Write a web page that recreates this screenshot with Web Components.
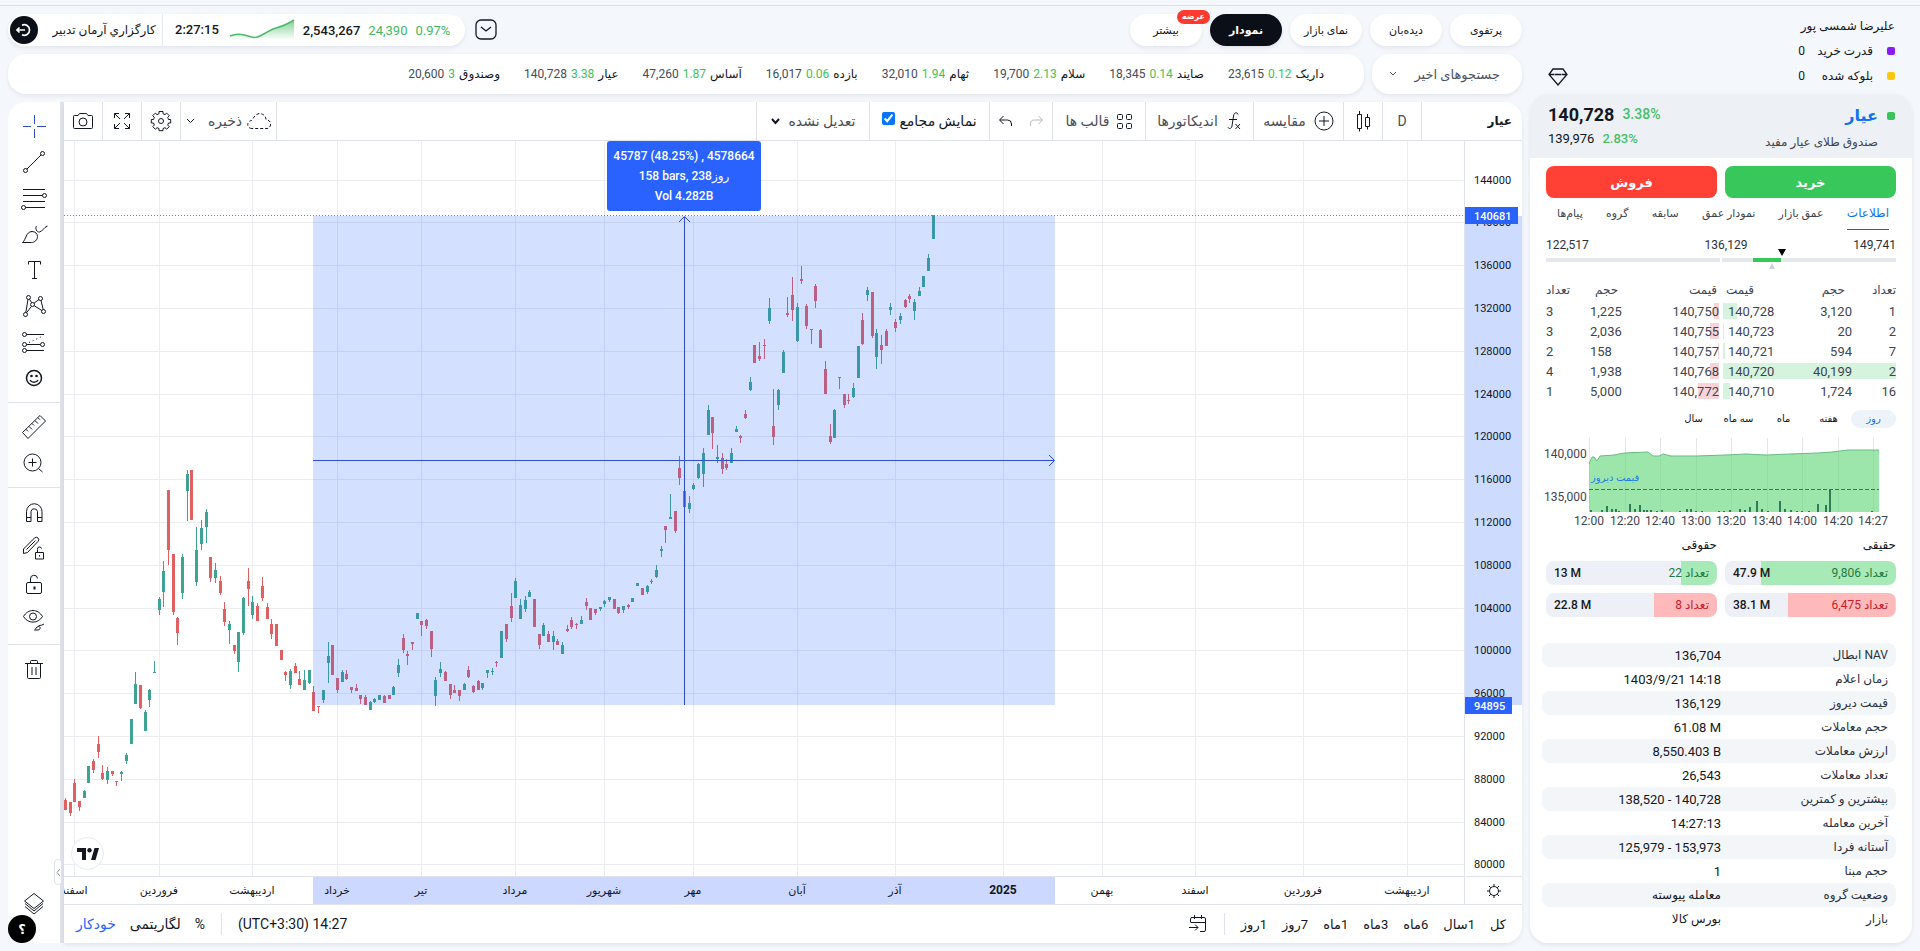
<!DOCTYPE html>
<html lang="fa">
<head>
<meta charset="utf-8">
<meta name="viewport" content="width=device-width, initial-scale=1">
<title>نمودار عیار</title>
<style>
  html, body { margin: 0; }
  body { background: #f4f7fb; font-family: Roboto, "DejaVu Sans", sans-serif; color: #131722; }
</style>
</head>
<body>
<trading-app></trading-app>

<script>
const BASE = `<style>
  :host, *, *::before, *::after { box-sizing: border-box; }
  button, select, input { font: inherit; color: inherit; margin: 0; }
  button { background: none; border: 0; padding: 0; cursor: pointer; }
  a { color: inherit; text-decoration: none; }
  svg { display: block; flex: none; }
  .ico { fill: none; stroke: currentColor; stroke-width: 1; }
</style>`;

function component(tag, html, setup) {
  const template = document.createElement('template');
  template.innerHTML = BASE + html;
  customElements.define(tag, class extends HTMLElement {
    connectedCallback() {
      if (this.shadowRoot) return;
      const root = this.attachShadow({ mode: 'open' });
      root.append(template.content.cloneNode(true));
      if (setup) setup.call(this, root);
    }
  });
}

/* ---------- top bar ---------- */
component('nav-pill', `<style>
  :host { display: block; position: relative; width: 72px; }
  a { display: flex; align-items: center; justify-content: center; height: 32px; border-radius: 16px;
      background: #fff; font-size: 11px; box-shadow: 0 2px 4px #1d2b4a14; white-space: nowrap; }
  :host([active]) a { background: #0b0f17; color: #fff; font-weight: bold; }
  ::slotted([slot=badge]) { position: absolute; top: -4px; right: -8px; height: 14px; line-height: 14px; padding: 0 5px;
      border-radius: 7px; background: #ff3b30; color: #fff; font-size: 8px; font-weight: bold; }
</style><a href="#"><slot></slot></a><slot name="badge"></slot>`);

component('market-summary', `<style>
  :host { display: flex; align-items: center; height: 32px; width: 457px; background: #fff; border-radius: 16px;
      box-shadow: 0 2px 4px #1d2b4a14; font-size: 13px; padding-left: 2px; }
  .out { width: 28px; height: 28px; border-radius: 50%; background: #0b0f17; color: #fff; display: grid; place-items: center; }
  .broker { width: 124px; padding-left: 8px; text-align: center; font-size: 12px; white-space: nowrap; }
  .time { border-left: 1px solid #e4e8ef; height: 32px; line-height: 32px; padding-left: 12px; }
  .g { color: #43b75d; }
  span, b { margin-left: 8px; font-weight: normal; }
  .time, b { font-weight: 500; }
  svg.sp { margin-left: 10px; }
</style>
<button class="out" aria-label="خروج"><svg class="ico" width="16" height="16"><path d="M6 3.2A5.3 5.3 0 1 1 6 12.8M1 8h8M3.5 5.5 1 8l2.500 2.500" stroke-width="1.700"/></svg></button>
<div class="broker" dir="rtl">کارگزاري آرمان تدبیر</div>
<div class="time">2:27:15</div>
<svg class="sp" width="66" height="24" viewBox="0 0 66 24"><defs><linearGradient id="g" x2="0" y2="1"><stop stop-color="#7fd394"/><stop offset="1" stop-color="#fff"/></linearGradient></defs>
<path d="M1 18C8 15 13 16 19 18S28 20 33 17 43 11 47 10 57 7 65 2V22H1Z" fill="url(#g)"/><path d="M1 18C8 15 13 16 19 18S28 20 33 17 43 11 47 10 57 7 65 2" fill="none" stroke="#4cbb6c" stroke-width="1.500"/></svg>
<b>2,543,267</b><span class="g">24,390</span><span class="g">0.97%</span>`);

component('top-bar', `<style>
  :host { display: flex; align-items: center; height: 32px; }
  .toggle { margin-left: 10px; }
  nav { display: flex; gap: 8px; margin-left: auto; }
</style>
<market-summary></market-summary>
<button class="toggle" aria-label="باز کردن"><svg class="ico" width="22" height="22"><rect x="1" y="1" width="20" height="19" rx="5" stroke-width="1.300"/><path d="m6 8 5 4 5-4" stroke-width="1.300"/></svg></button>
<nav dir="rtl">
  <nav-pill>پرتفوی</nav-pill><nav-pill>دیده‌بان</nav-pill><nav-pill>نمای بازار</nav-pill>
  <nav-pill active>نمودار</nav-pill><nav-pill>بیشتر<span slot="badge">عرضه</span></nav-pill>
</nav>`);

component('ticker-item', `<style>
  :host { display: flex; gap: 4px; font-size: 12px; line-height: 20px; white-space: nowrap; }
  .c { color: #3fbf5c; } .p { color: #464c58; }
</style><slot></slot><span class="c"></span><span class="p"></span>`, function (root) {
  root.querySelector('.c').textContent = this.getAttribute('change');
  root.querySelector('.p').textContent = this.getAttribute('price');
});

component('ticker-row', `<style>
  :host { display: flex; gap: 8px; height: 40px; direction: rtl; }
  .card { background: #fff; border-radius: 18px; box-shadow: 0 2px 4px #1d2b4a14; display: flex; align-items: center; }
  .recent { width: 150px; justify-content: space-between; padding: 0 22px 0 17px; font-size: 13px; color: #4d535f; white-space: nowrap; }
  .list { flex: 1; gap: 24px; padding-right: 40px; overflow: hidden; }
</style>
<button class="card recent"><span>جستجوهای اخیر</span><svg class="ico" width="8" height="6"><path d="m1 1 3 3 3-3"/></svg></button>
<div class="card list">
  <ticker-item change="0.12" price="23,615">داریک</ticker-item>
  <ticker-item change="0.14" price="18,345">صایند</ticker-item>
  <ticker-item change="2.13" price="19,700">سلام</ticker-item>
  <ticker-item change="1.94" price="32,010">ثهام</ticker-item>
  <ticker-item change="0.06" price="16,017">بازده</ticker-item>
  <ticker-item change="1.87" price="47,260">آساس</ticker-item>
  <ticker-item change="3.38" price="140,728">عیار</ticker-item>
  <ticker-item change="3" price="20,600">وصندوق</ticker-item>
</div>`);

/* ---------- chart: drawing tools ---------- */
const TOOLS = [
  ['نشانگر', '<g stroke="#2a50c8"><path d="M3 14.500h8M17 14.500h9M14.500 3v9M14.500 17v9"/></g>'],
  ['خط روند', '<circle cx="5.500" cy="22.500" r="2"/><circle cx="22.500" cy="5.500" r="2"/><path d="M7 21 21 7"/>'],
  ['فیبوناچی', '<path d="M3 5.500h22M3 11.500h19.500M3 17.500h22M5.500 23.500H25"/><circle cx="24.500" cy="11.500" r="2"/><circle cx="3.500" cy="23.500" r="2"/>'],
  ['قلم مو', '<path d="M2.500 22.500C6 20 6 11.500 12 11.500c3.500 0 5.500 2.500 5.500 5 0 3.500-3 6-6 6ZM16.500 6c-1.500 2 0 6.500 3 6 3-.5 4-4.500 8-6"/>'],
  ['متن', '<path d="M8.500 8.500v-3h12v3M14.500 5.500v17M12 22.500h5"/>'],
  ['الگوها', '<circle cx="8.500" cy="5.500" r="2"/><circle cx="20.500" cy="6.500" r="2"/><circle cx="12.500" cy="12.500" r="2"/><circle cx="5.500" cy="22.500" r="2"/><circle cx="23.500" cy="19.500" r="2"/><path d="m8 7.500-2.200 13M9.500 7.200l2.200 3.500M14 11.200l5-3.700M6.500 20.800l5-6.500M14.200 13.700l7.600 4.800M21 8.500l2.200 9"/>'],
  ['پیش‌بینی', '<circle cx="4.500" cy="6.500" r="2"/><circle cx="4.500" cy="16.500" r="2"/><circle cx="22.500" cy="16.500" r="2"/><circle cx="4.500" cy="22.500" r="2"/><path d="M6.500 6.500H24M6.500 16.500h14M6.500 22.500H24"/><path stroke-dasharray="1 3" d="m9 14.500 14-6.500"/>'],
  ['شکلک', '<circle cx="14" cy="14" r="7.500" stroke-width="1.500"/><path d="M10 16c1.500 3 6.500 3 8 0" stroke-width="1.500"/><g fill="currentColor" stroke="none"><circle cx="11.500" cy="12" r="1.300"/><circle cx="16.500" cy="12" r="1.300"/></g>'],
  null,
  ['خط‌کش', '<path d="M2.500 19.500 20 2.500l5.500 5.500-17.500 17.500ZM6 16.300l2 2M9 13.400l3 3M12 10.500l2 2M15 7.600l3 3M18 4.700l2 2"/>'],
  ['بزرگ‌نمایی', '<circle cx="12.500" cy="13.500" r="8.500"/><path d="m18.500 19.500 4 3.500M8.500 13.500h8M12.500 9.500v8"/>'],
  null,
  ['آهنربا', '<path d="M6.500 23.500v-10a7.500 7.500 0 0 1 15.500 0v10h-4.500v-10a3.300 3.300 0 0 0-6.500 0v10ZM6.500 19.500H11M17.500 19.500H22"/>'],
  ['قفل رسم', '<path d="M3.500 19.500v-4.500L14.500 4a2 2 0 0 1 3.500 3.500L7.500 18.500ZM6.500 15.500l9-9M15.500 18.500h8v6.500h-8ZM17.500 18.500v-3a2 2 0 0 1 4-1M19.500 21v1.500"/>'],
  ['قفل', '<rect x="6.500" y="12.500" width="15" height="11" rx="1.500"/><path d="M10.500 12.500V9a3.500 3.500 0 0 1 7-.5"/><path d="M14.500 16.500v3" stroke-width="2"/>'],
  ['نمایش', '<path d="M3.500 10.500C8 2.500 18 2.500 22.500 10.500 18 18 8 18 3.500 10.500Z"/><circle cx="13" cy="10.500" r="3.500"/><path d="M14.500 24c1.500-.5 1.500-3.500 4-3.500 2.500 0 2 3.500-.5 3.500ZM18.500 20.500c0-2 2 0 5.500-2.500"/>'],
  null,
  ['حذف', '<path d="M5 8.500h18M10.500 8.500v-2a1 1 0 0 1 1-1h5a1 1 0 0 1 1 1v2M7.500 8.500v14a1 1 0 0 0 1 1h11a1 1 0 0 0 1-1v-14M12 12v8M16 12v8"/>'],
];

component('draw-tools', `<style>
  :host { display: flex; flex-direction: column; width: 52px; padding: 6px 0 22px; background: #fff; position: relative; }
  button { height: 36px; display: grid; place-items: center; }
  hr { width: 100%; border: 0; border-top: 1px solid #e0e3eb; margin: 6px 0; }
  .layers { margin-top: auto; }
  .help { position: absolute; left: 0; bottom: 0; width: 28px; height: 28px; border-radius: 50%; background: #000; color: #fff; font-size: 13px; font-weight: bold; }
  .fold { position: absolute; right: -2px; bottom: 58px; width: 8px; height: 26px; border: 1px solid #e0e3eb; border-radius: 4px; background: #fff; color: #9598a1; }
</style><button class="layers" aria-label="لایه‌ها"><svg class="ico" width="28" height="28"><path d="m14 4.500 9.500 7.500-9.500 7.500L4.500 12ZM5 14.500l9 7.500 9-7.500M5 17.500l9 7.500 9-7.500"/></svg></button>
<button class="help">؟</button>
<button class="fold" aria-label="بستن"><svg class="ico" width="5" height="9"><path d="M4 1 1 4.500 4 8"/></svg></button>`, function (root) {
  const anchor = root.querySelector('.layers');
  for (const tool of TOOLS) {
    if (!tool) { anchor.before(document.createElement('hr')); continue; }
    const b = document.createElement('button');
    b.setAttribute('aria-label', tool[0]);
    b.innerHTML = `<svg class="ico" width="28" height="28">${tool[1]}</svg>`;
    anchor.before(b);
  }
});

/* ---------- chart: header toolbar ---------- */
component('chart-toolbar', `<style>
  :host { display: flex; height: 39px; border-bottom: 1px solid #e0e3eb; background: #fff; direction: rtl; font-size: 14px; color: #4a4e59; }
  :host > * { white-space: nowrap; }
  .cell { display: flex; align-items: center; justify-content: center; border-left: 1px solid #e0e3eb; gap: 8px; white-space: nowrap; }
  .dark, .ico { color: #131722; }
  .symbol { width: 101px; justify-content: flex-start; padding-right: 10px; font-size: 12px; font-weight: bold; }
  .sq { width: 39px; } .gap { flex: 1; }
  .undo { width: 63px; gap: 16px; } .compare { width: 90px; } .templates { width: 93px; gap: 6px; } .save { width: 96px; gap: 5px; } .indicators { width: 108px; } .adjust { width: 113px; } .meet { width: 120px; gap: 4px; }
  input { width: 13px; height: 13px; margin-bottom: 5px; accent-color: #0a75ff; }
  select { appearance: none; border: 0; background: none; padding: 0; direction: rtl; }
  .last { border-left: 0; width: 38px; }
  .off { opacity: .3; }
  .drop { margin-right: 8px; }
</style>
<div class="cell symbol dark">عیار</div>
<button class="cell sq">D</button>
<button class="cell sq" aria-label="نوع نمودار"><svg class="ico" width="16" height="22"><path d="M2.500 4.500h4v14h-4ZM4.500 1v3M4.500 18.500v3M10.500 7.500h4v9h-4ZM12.500 4v3M12.500 16.500v3"/></svg></button>
<button class="cell compare"><svg class="ico" width="20" height="20"><circle cx="10" cy="10" r="9"/><path d="M5 10h10M10 5v10"/></svg>مقایسه</button>
<button class="cell indicators"><svg class="ico" width="16" height="20"><path d="M12 3.500C11.500 1 8 1 7.500 5L6 15c-.5 3-3 3-4 1.500M3 8.500h8M9.500 13l4.500 5M14 13l-4.500 5"/></svg>اندیکاتورها</button>
<button class="cell templates"><svg class="ico" width="17" height="17"><rect x="1.500" y="1.500" width="5" height="5" rx="1"/><rect x="10.500" y="1.500" width="5" height="5" rx="1"/><rect x="1.500" y="10.500" width="5" height="5" rx="1"/><rect x="10.500" y="10.500" width="5" height="5" rx="1"/></svg>قالب ها</button>
<div class="cell undo"><button class="off" aria-label="جلو"><svg class="ico" width="15" height="12"><path d="M1.500 11V9a4 4 0 0 1 4-4H13M9.500 1 13.500 5 9.500 9"/></svg></button><button aria-label="عقب"><svg class="ico" width="15" height="12"><path d="M13.500 11V9a4 4 0 0 0-4-4H2M5.500 1 1.500 5l4 4"/></svg></button></div>
<label class="cell meet dark">نمایش مجامع <input type="checkbox" checked></label>
<div class="cell adjust"><select aria-label="تعدیل"><option>تعدیل نشده</option></select><svg class="ico" width="9" height="7"><path d="m1 1 3.500 4L8 1" stroke-width="2"/></svg></div>
<div class="cell gap"></div>
<button class="cell save"><svg class="ico" width="24" height="18"><path stroke-dasharray="3 2" d="M5 16.500a4 4 0 0 1-.5-8C5.500 8 7 3 12 1.500c4 0 7 2.500 7 6 4 1 5 3 4.500 5.500-.5 2.500-2 3.500-3.500 3.500Z"/></svg>ذخیره<svg class="ico drop" width="9" height="6"><path d="m1 1 3.500 3.500L8 1"/></svg></button>
<button class="cell sq" aria-label="تنظیمات"><svg class="ico" width="22" height="22"><circle cx="11" cy="11" r="2.500"/><path d="M9 1.500h4v2.200l2 .9 1.700-1.500 2.500 2.500L17.700 7.500l.8 2h2.200v3.500h-2.200l-.8 2 1.500 1.700-2.500 2.500-1.700-1.500-2 .8v2.200H9v-2.200l-2-.8-1.700 1.500L2.800 16.700 4.300 15l-.8-2H1.300V9.500h2.200l.8-2L2.800 5.600l2.500-2.500L7 4.600l2-.9Z"/></svg></button>
<button class="cell sq" aria-label="تمام صفحه"><svg class="ico" width="18" height="18"><path d="M1.500 6V1.500H6M1.500 1.500 7 7M12 1.500h4.500V6M16.500 1.500 11 7M1.500 12v4.500H6M1.500 16.500 7 11M12 16.500h4.500V12M16.500 16.500 11 11"/></svg></button>
<button class="cell last" aria-label="عکس"><svg class="ico" width="22" height="18"><path d="M2.500 3.500H6l1.500-2h7l1.500 2h3.500a1 1 0 0 1 1 1v11a1 1 0 0 1-1 1h-17a1 1 0 0 1-1-1v-11a1 1 0 0 1 1-1Z"/><circle cx="11" cy="10" r="4"/></svg></button>`);

/* ---------- chart: price plot ---------- */
/* Each block: origin x, origin y, then candles as [x, high, bodyTop, bodyBottom, low, up] in thirds of a unit. */
const CANDLES = [
  [0, 440, `196,1075,1080,1109,1109,0 211,1086,1086,1119,1127,0 223,1017,1029,1085,1085,0 238,1083,1083,1101,1112,0 253,1050,1053,1074,1074,1 265,978,978,1028,1028,1 280,957,963,990,999,0 295,888,912,936,954,0 307,976,999,1018,1020,0 322,981,993,1020,1032,1 337,993,993,1002,1007,0 349,1023,1023,1027,1037,0 364,993,996,1002,1023,1 379,938,944,964,971,1 394,837,837,911,911,1 406,696,732,792,792,1 421,735,735,803,807,0 436,810,816,873,873,1 448,747,750,780,800,1 463,663,696,698,698,1 478,471,477,510,525,1 490,363,393,456,500,1 505,150,150,330,375,0 520,342,342,516,525,0 532,531,534,579,615,0 547,342,350,459,477,1 562,90,102,153,243,1 574,90,90,240,240,0 589,261,330,426,438,1 604,240,264,312,330,1 619,207,216,261,309,1 631,351,351,414,426,0 646,369,390,414,428,1 661,408,423,459,465,0 673,486,507,546,558,0 688,543,552,570,612,1 703,615,615,633,642,0 715,576,576,666,696,1 730,471,474,579,585,1 745,384,423,447,498,0 757,468,486,525,537,1 772,489,498,543,543,0 787,411,438,474,483,0 802,489,501,537,537,0 814,537,552,582,597,0 829,552,552,618,618,0 844,630,630,660,660,0 856,693,696,705,723,0 871,687,693,735,747,1 886,669,678,699,699,0 898,693,717,735,735,0 913,690,720,750,750,1 928,690,690,729,732,1 940,738,756,813,813,0 955,798,798,801,819,0 970,750,750,780,789,1`],
  [300, 440, `85,606,648,668,729,1 97,615,615,705,705,0 112,714,714,750,759,0 127,690,696,726,726,1 139,690,702,717,720,0 154,741,741,750,760,0 169,732,744,753,753,0 181,765,765,777,792,0 196,765,771,795,795,0 211,783,786,810,810,1 223,774,777,786,790,1 238,765,765,780,780,1 253,765,768,789,789,0 268,765,765,777,777,0 280,738,741,765,765,1 295,656,675,699,711,1 310,582,594,630,639,0 322,633,642,648,675,0 337,606,606,611,630,0 352,519,519,537,537,1 364,543,543,555,588,0 379,537,540,558,567,0 394,573,573,627,651,0 406,711,720,768,798,1 421,666,687,699,711,1 436,693,696,723,723,0 451,732,732,765,777,0 463,735,750,759,759,0 478,750,750,768,783,0 493,729,732,750,750,1 505,678,690,711,714,0 520,735,738,756,759,0 535,720,723,750,750,0 547,729,729,744,750,1 562,690,690,698,714,1 577,684,693,696,705,1 589,663,666,669,681,0 604,573,573,654,654,1 619,552,552,597,606,0 634,459,498,534,546,0 646,414,423,474,474,1 661,477,495,537,537,1 676,468,480,507,516,1 688,450,456,471,471,1 703,477,477,561,561,0 718,582,582,615,627,0 730,549,555,588,588,1 745,573,582,606,606,0 760,573,588,606,630,1 772,597,603,615,615,0 787,606,615,642,642,1 802,555,567,573,576,0 814,531,541,561,567,0 829,549,552,555,567,0 844,528,540,552,552,1 859,474,486,498,510,0 871,504,504,540,540,0 886,507,507,519,524,0 901,501,501,507,513,1 913,480,483,493,500,1 928,471,471,480,487,1 943,477,477,507,507,0 955,501,501,519,522,0 970,498,498,510,519,1 985,492,495,501,507,0 997,474,474,486,486,1 1012,429,429,438,438,1 1027,444,444,465,465,0 1042,435,438,457,462,1 1054,417,423,426,432,1 1069,375,390,410,414,1 1084,318,327,333,351,1 1096,258,258,270,309,0 1111,162,231,237,237,1 1126,213,213,273,279,0 1138,48,84,114,135,0 1153,153,153,201,201,0 1168,168,189,207,219,1`],
  [640, 210, `160,819,825,837,840,1 175,759,762,804,807,1 190,714,729,792,831,1 205,585,600,675,675,1 217,621,621,669,717,0 232,705,741,747,759,1 247,729,744,777,792,0 259,747,762,774,780,0 274,714,729,759,759,1 289,648,657,666,666,1 301,675,678,684,699,0 316,600,612,625,627,0 331,501,516,540,543,1 343,405,405,459,459,0 358,396,438,448,453,0 373,387,405,408,447,0 388,265,294,333,342,1 400,537,648,681,705,0 415,537,540,585,600,1 430,420,426,489,489,1 442,261,309,316,321,0 457,201,255,300,333,0 472,279,291,393,396,1 484,168,207,214,222,0 499,282,288,349,357,0 514,357,357,361,402,1 526,222,228,273,294,0 541,357,360,414,414,0 556,453,477,552,552,0 571,642,678,696,702,0 583,597,600,684,684,1 598,501,501,505,537,0 613,552,552,585,594,0 625,552,570,573,582,0 640,519,534,561,564,1 655,408,408,504,504,1 667,309,330,402,405,0 682,231,240,255,273,1 697,246,246,378,384,0 709,357,369,441,477,1 724,375,405,420,462,0 739,357,363,408,408,0 751,279,291,300,315,1 766,327,336,354,367,0 781,309,318,331,342,1 796,267,270,291,294,0 808,252,258,267,279,0 823,267,276,303,330,1 838,231,243,258,258,1 850,198,198,231,231,1 865,132,144,183,183,1 880,15,15,87,87,1`],
];
const MONTHS = [[74, 'اسفند'], [159, 'فروردین'], [252, 'اردیبهشت'], [337, 'خرداد'], [421, 'تیر'], [515, 'مرداد'], [604, 'شهریور'], [693, 'مهر'],
  [797, 'آبان'], [895, 'آذر'], [1003, '2025'], [1102, 'بهمن'], [1195, 'اسفند'], [1303, 'فروردین'], [1407, 'اردیبهشت']];
const LEVELS = [180, 222, 265, 308, 351, 394, 436, 479, 522, 565, 608, 650, 693, 736, 779, 822, 864];

component('price-plot', `<style>
  :host { display: block; position: relative; overflow: hidden; min-height: 0; }
  .plot { position: absolute; inset: 0; width: 100%; height: 100%; }
  .tip { position: absolute; top: 0; left: 543px; width: 154px; height: 70px; padding: 5px 0; border-radius: 3px; background: #2962ff;
      color: #fff; font-size: 12px; font-weight: 500; line-height: 20px; text-align: center; white-space: nowrap; }
  .tip div { height: 20px; }
  .mark { position: absolute; left: 7px; bottom: 6px; width: 33px; height: 33px; border: 1px solid #e8eaf0; border-radius: 50%; background: #fff; display: grid; place-items: center; }
</style>
<svg class="plot" viewBox="64 141 1400 735" preserveAspectRatio="xMaxYMin slice">
  <g id="grid" stroke="#ecedf1"></g><g id="bars" shape-rendering="crispEdges"></g>
  <rect x="313" y="216" width="742" height="489" fill="#2962ff" fill-opacity=".2"/>
  <path d="M64 215.500H1464" stroke="#3d9a93" stroke-dasharray="1 2"/>
  <path d="M313 460.500h741M684.500 705V217M679 222l5.500-5.500 5.500 5.500M1049 455l5.500 5.500-5.500 5.500" fill="none" stroke="#2f4fd0"/>
</svg>
<div class="tip"><div>45787 (48.25%) , 4578664</div><div dir="ltr">158 bars, 238روز</div><div>Vol 4.282B</div></div>
<a class="mark" href="#" aria-label="TradingView"><svg width="22" height="12" viewBox="0 0 22 12"><path d="M0 0h9v12H5V4H0ZM14 12h4.500L22 0h-4.500Z" fill="#131722"/><circle cx="12.500" cy="2.200" r="2.200" fill="#131722"/></svg></a>`, function (root) {
  root.getElementById('grid').innerHTML =
    LEVELS.map(y => `<path d="M64 ${y}.5H1464"/>`).join('') + MONTHS.map(m => `<path d="M${m[0]}.5 141V876"/>`).join('');
  let out = '';
  for (const [ox, oy, rows] of CANDLES)
    for (const row of rows.split(' ')) {
      const [x, h, t, b, l, up] = row.split(',').map(Number);
      const px = ox + Math.floor(x / 3), y = v => Math.round(oy + v / 3);
      out += `<g fill="${up ? '#3fa394' : '#e06062'}"><rect x="${px}" y="${y(h)}" width="1" height="${y(l) - y(h)}"/><rect x="${px - 1}" y="${y(t)}" width="3" height="${Math.max(1, y(b) - y(t))}"/></g>`;
    }
  root.getElementById('bars').innerHTML = out;
});

component('price-axis', `<style>
  :host { display: block; position: relative; min-height: 0; border-left: 1px solid #e0e3eb; }
  svg { position: absolute; inset: 0; width: 100%; height: 100%; }
  text { font-size: 11px; fill: #131722; }
  .on { fill: #fff; font-weight: 500; }
</style><svg viewBox="1465 141 57 735" preserveAspectRatio="xMinYMin slice">
  <rect x="1465" y="216" width="57" height="489" fill="#2962ff" fill-opacity=".23"/><g id="t"></g>
  <rect x="1465" y="207" width="53" height="17" fill="#2962ff"/><text class="on" x="1474" y="220">140681</text>
  <rect x="1465" y="697" width="47" height="17" fill="#2962ff"/><text class="on" x="1474" y="710">94895</text>
</svg>`, function (root) {
  root.getElementById('t').innerHTML = LEVELS.map((y, i) => `<text x="1474" y="${y + 4}">${144000 - i * 4000}</text>`).join('');
});

component('time-axis', `<style>
  :host { display: block; position: relative; border-top: 1px solid #e0e3eb; }
  svg { position: absolute; inset: 0; width: 100%; height: 100%; }
  text { font-size: 11px; fill: #131722; text-anchor: middle; }
  .year { font-size: 12px; font-weight: 700; }
</style><svg viewBox="64 877 1400 27" preserveAspectRatio="xMaxYMin slice"><rect x="313" y="877" width="742" height="27" fill="#ccd8ff"/><g id="t"></g></svg>`, function (root) {
  root.getElementById('t').innerHTML = MONTHS.map(([x, n]) => `<text x="${x}" y="894"${n === '2025' ? ' class="year"' : ''}>${n}</text>`).join('');
});

component('chart-footer', `<style>
  :host { display: flex; align-items: center; height: 39px; border-top: 1px solid #e0e3eb; background: #fff; direction: rtl; padding: 0 16px 0 12px; font-size: 14px; white-space: nowrap; }
  .ranges { display: flex; gap: 15px; font-size: 13px; }
  i { width: 1px; height: 22px; background: #e0e3eb; margin: 0 16px; }
  .clock { margin-right: auto; }
  .modes { display: flex; gap: 14px; align-items: center; }
  .blue { color: #2962ff; }
</style>
<div class="ranges"><button>کل</button><button>1سال</button><button>6ماه</button><button>3ماه</button><button>1ماه</button><button>7روز</button><button>1روز</button></div>
<i></i>
<button aria-label="تاریخ"><svg class="ico" width="20" height="18"><path d="M2.500 7V4a1.500 1.500 0 0 1 1.500-1.500h12A1.500 1.500 0 0 1 17.500 4v11a1.500 1.500 0 0 1-1.500 1.500H12M2.500 7.500h15M6.500 0v4M13.500 0v4M1 12.500h9M7 9.500l3 3-3 3"/></svg></button>
<button class="clock" dir="ltr">(UTC+3:30) 14:27</button>
<i></i>
<div class="modes"><button>%</button><button>لگاریتمی</button><button class="blue">خودکار</button></div>`);

component('chart-card', `<style>
  :host { display: grid; grid-template-columns: 52px 4px minmax(0, 1fr); min-height: 700px; }
  draw-tools { border-radius: 18px 0 0 18px; }
  .bar { background: #e0e3eb; }
  .main { display: grid; grid-template: 39px minmax(0, 1fr) 28px 39px / minmax(0, 1fr) 58px; background: #fff; border-radius: 0 18px 18px 0; overflow: hidden; box-shadow: 0 2px 4px #1d2b4a14; }
  chart-toolbar, chart-footer { grid-column: 1 / -1; }
  .set { display: grid; place-items: center; border: solid #e0e3eb; border-width: 1px 0 0 1px; }
</style>
<draw-tools></draw-tools><div class="bar"></div>
<div class="main">
  <chart-toolbar></chart-toolbar>
  <price-plot></price-plot><price-axis></price-axis>
  <time-axis></time-axis>
  <button class="set" aria-label="تنظیمات محور"><svg class="ico" width="16" height="16"><circle cx="8" cy="8" r="4.500"/><path d="M8 1v2.500M8 12.500V15M1 8h2.500M12.500 8H15M3 3l1.800 1.800M11.200 11.200 13 13M13 3l-1.800 1.800M4.800 11.200 3 13"/></svg></button>
  <chart-footer></chart-footer>
</div>`);

/* ---------- sidebar ---------- */
component('user-box', `<style>
  :host { display: flex; justify-content: space-between; align-items: flex-end; height: 80px; padding: 0 17px 8px 18px; direction: rtl; font-size: 12px; }
  .rows { display: grid; grid-template-columns: 8px 54px auto; gap: 5px 14px; align-items: center; line-height: 20px; }
  h1 { grid-column: 1 / -1; font-size: 12px; line-height: 20px; margin: 0; font-weight: normal; }
  i { width: 8px; height: 8px; border-radius: 2px; } span { white-space: nowrap; }
</style>
<div class="rows"><h1>علیرضا شمسی پور</h1>
<i style="background:#8a1cf5"></i><span>قدرت خرید</span><span>0</span>
<i style="background:#fcc90a"></i><span>بلوکه شده</span><span>0</span></div>
<svg class="ico" width="20" height="18"><path d="M5 1h10l4 5.500L10 17 1 6.500ZM1 6.500h5M14 6.500h5M6.500 6.500h7" stroke-width="1.300"/></svg>`);

component('symbol-head', `<style>
  :host { display: flex; justify-content: space-between; height: 64px; padding: 8px 17px 0 18px; background: #edf0f5; direction: rtl; }
  .n { display: grid; grid-template-columns: 8px auto; column-gap: 9px; align-content: start; line-height: 24px; font-size: 12px; color: #3f4550; }
  .n i { width: 8px; height: 8px; border-radius: 2px; background: #3cc45c; align-self: center; }
  h2 { margin: 0; font-size: 16px; line-height: 28px; color: #0f73ee; }
  .n p { grid-column: 2; margin: 0; }
  .p { direction: ltr; } .p div { display: flex; gap: 8px; align-items: center; height: 24px; font-size: 13px; }
  .p b { font-size: 18px; } .g { color: #4abf68; font-weight: 500; } b + .g { font-size: 14px; }
</style>
<div class="n"><i></i><h2>عیار</h2><p>صندوق طلای عیار مفید</p></div>
<div class="p"><div><b>140,728</b><span class="g">3.38%</span></div><div><span>139,976</span><span class="g">2.83%</span></div></div>`);

component('trade-buttons', `<style>
  :host { display: grid; grid-template-columns: 1fr 1fr; gap: 8px; direction: rtl; }
  button { height: 32px; border-radius: 8px; color: #fff; font-size: 13px; font-weight: bold; }
  .buy { background: #38c75a; } .sell { background: #ff4035; }
</style><button class="buy">خرید</button><button class="sell">فروش</button>`);

component('info-tabs', `<style>
  :host { display: flex; justify-content: space-between; height: 32px; padding: 0 7px 0 11px; direction: rtl; font-size: 11px; line-height: 31px; color: #3f4550; white-space: nowrap; }
  a.on { color: #0f73ee; border-bottom: 1px solid #1b66b8; font-size: 12px; }
</style><a class="on" href="#">اطلاعات</a><a href="#">عمق بازار</a><a href="#">نمودار عمق</a><a href="#">سابقه</a><a href="#">گروه</a><a href="#">پیام‌ها</a>`);

component('price-range', `<style>
  :host { display: block; font-size: 12px; color: #2b313c; }
  .l { display: flex; justify-content: space-between; line-height: 20px; padding-top: 5px; }
  .l span:nth-child(2) { margin-right: -10px; }
  .b { display: flex; gap: 2px; height: 4px; margin-top: 3px; position: relative; }
  .b i { flex: 1; background: #e3e8ef; }
  .b b { position: absolute; left: 59%; width: 8%; height: 4px; background: #38c75a; }
  .b svg { position: absolute; left: 63%; top: -9px; }
</style><div class="l"><span>122,517</span><span>136,129</span><span>149,741</span></div>
<div class="b"><i></i><i></i><b></b><svg width="20" height="20"><path d="M11 0h8l-4 7Z" fill="#000"/><path d="M2 20 5 14l3 6Z" fill="#ccd0e0"/></svg></div>`);

component('order-book', `<style>
  :host { display: grid; grid-template-columns: 1fr 1fr; gap: 4px; font-size: 13px; color: #3e4552; }
  table { border-collapse: collapse; table-layout: fixed; width: 100%; }
  th { font-size: 12px; font-weight: normal; height: 22px; padding: 0; }
  td { height: 20px; padding: 0; }
  .bid { direction: rtl; } .bid td, .bid th { text-align: right; }
  td, th { white-space: nowrap; }
  .bid td:last-child { text-align: left; padding-left: 5px; } .bid th:last-child { text-align: left; padding-left: 3px; }
  .ask td, .ask th { text-align: left; } .ask td:last-child { text-align: right; } .ask th:last-child { text-align: right; padding-right: 2px; }
  .bid th:nth-child(2) { padding-right: 7px; } .ask th:nth-child(2) { padding-left: 5px; }
  .a1 { width: 44px; } .a2 { width: 60px; }
  tbody tr { background: linear-gradient(#d6f3dd, #d6f3dd) left center / var(--w) 16px no-repeat; }
  .ask tbody tr { background-image: linear-gradient(#f8d3d8, #f8d3d8); background-position: right center; }
</style>
<table class="ask"><colgroup><col class="a1"><col class="a2"><col></colgroup><thead><tr><th>تعداد</th><th>حجم</th><th>قیمت</th></tr></thead><tbody>
<tr style="--w:5px"><td>3</td><td>1,225</td><td>140,750</td></tr><tr style="--w:9px"><td>3</td><td>2,036</td><td>140,755</td></tr>
<tr style="--w:1px"><td>2</td><td>158</td><td>140,757</td></tr><tr style="--w:9px"><td>4</td><td>1,938</td><td>140,768</td></tr>
<tr style="--w:21px"><td>1</td><td>5,000</td><td>140,772</td></tr></tbody></table>
<table class="bid"><colgroup><col class="a1"><col class="a2"><col></colgroup><thead><tr><th>تعداد</th><th>حجم</th><th>قیمت</th></tr></thead><tbody>
<tr style="--w:14px"><td>1</td><td>3,120</td><td>140,728</td></tr><tr style="--w:1px"><td>2</td><td>20</td><td>140,723</td></tr>
<tr style="--w:2px"><td>7</td><td>594</td><td>140,721</td></tr><tr style="--w:100%"><td>2</td><td>40,199</td><td>140,720</td></tr>
<tr style="--w:7px"><td>16</td><td>1,724</td><td>140,710</td></tr></tbody></table>`);

component('period-tabs', `<style>
  :host { display: flex; direction: rtl; font-size: 10px; }
  button { width: 45px; height: 18px; line-height: 18px; border-radius: 9px; white-space: nowrap; }
  .on { background: #eef3f9; color: #0f73ee; }
</style><button class="on">روز</button><button>هفته</button><button>ماه</button><button>سه ماه</button><button>سال</button>`);

component('day-chart', `<style>
  :host { display: block; }
  svg { width: 100%; height: 96px; overflow: visible; }
  text { font-size: 12px; fill: #3e4552; } .x { text-anchor: middle; }
  .prev { font-size: 10px; fill: #1f7fe0; }
</style><svg viewBox="1546 436 350 96" preserveAspectRatio="xMidYMin meet">
  <g id="g" stroke="#e4e6ea"></g>
  <path d="M1589 464l3-7 2 0 3 4 3-5 14-1 10-2 24-1 5 4 6 0 4-2 8 2 25 0 30-1 20-1 20 1 24-1 28-1 14-1 16-2h31V512H1589Z" fill="#5fd678" fill-opacity=".62"/>
  <path d="M1589 464l3-7 2 0 3 4 3-5 14-1 10-2 24-1 5 4 6 0 4-2 8 2 25 0 30-1 20-1 20 1 24-1 28-1 14-1 16-2h31" fill="none" stroke="#68bb82"/>
  <path id="v" stroke="#2f7d57" stroke-width="2"/>
  <path d="M1589 489.500h290" stroke="#1d6fd0" stroke-dasharray="4 2"/>
  <text class="prev" x="1591" y="481">قیمت دیروز</text>
  <text x="1544" y="458">140,000</text><text x="1544" y="501">135,000</text><g id="t"></g>
</svg>`, function (root) {
  const ticks = ['12:00', '12:20', '12:40', '13:00', '13:20', '13:40', '14:00', '14:20', '14:27'].map((n, i) => [Math.round(1589 + i * 35.5), n]);
  root.getElementById('g').innerHTML = ticks.map(([x]) => `<path d="M${x}.5 438V512"/>`).join('');
  root.getElementById('t').innerHTML = ticks.map(([x, n]) => `<text class="x" x="${x}" y="525">${n}</text>`).join('');
  const vol = [[1591, 2], [1602, 2], [1607, 6], [1612, 3], [1616, 3], [1619, 1], [1630, 8], [1635, 3], [1640, 7], [1644, 2], [1647, 2], [1651, 2], [1657, 1], [1662, 2], [1680, 1], [1687, 3], [1691, 3], [1696, 1], [1702, 1], [1719, 1], [1724, 1], [1730, 2], [1740, 3], [1745, 2], [1750, 5], [1757, 11], [1762, 3], [1768, 1], [1780, 11], [1785, 3], [1791, 2], [1797, 1], [1802, 1], [1809, 1], [1818, 8], [1826, 7], [1830, 22], [1872, 1]];
  root.getElementById('v').setAttribute('d', vol.map(([x, h]) => `M${x} 512v-${h}`).join(''));
});

component('holder-bar', `<style>
  :host { display: flex; align-items: center; justify-content: space-between; height: 24px; border-radius: 8px; overflow: hidden; direction: rtl; padding: 0 8px; font-size: 12px; white-space: nowrap;
     background: linear-gradient(#a8e9b8, #a8e9b8) right / var(--share) 100% no-repeat #edf0f6; --t: #247a3c; }
  :host([sell]) { background-image: linear-gradient(#feb9bb, #feb9bb); --t: #c4212b; }
  .c { color: var(--t); } .v { direction: ltr; font-weight: 500; }
</style><span class="c">تعداد <slot></slot></span><span class="v"></span>`, function (root) {
  root.querySelector('.v').textContent = this.getAttribute('volume');
  this.style.setProperty('--share', this.getAttribute('share'));
});

component('holder-split', `<style>
  :host { display: grid; grid-template-columns: 1fr 1fr; gap: 8px; direction: rtl; }
  h3 { margin: 0; font-size: 12px; line-height: 16px; font-weight: normal; }
</style><h3>حقیقی</h3><h3>حقوقی</h3>
<holder-bar volume="47.9 M" share="79%">9,806</holder-bar><holder-bar volume="13 M" share="21%">22</holder-bar>
<holder-bar sell volume="38.1 M" share="63%">6,475</holder-bar><holder-bar sell volume="22.8 M" share="37%">8</holder-bar>`);

component('fact-table', `<style>
  :host { display: block; margin-left: -4px; }
  table { width: 100%; border-collapse: separate; border-spacing: 0; direction: rtl; table-layout: fixed; }
  th, td { height: 24px; padding: 0; text-align: right; white-space: nowrap; }
  th { font-size: 12px; font-weight: normal; padding-right: 8px; color: #2b313c; width: 175px; border-radius: 0 8px 8px 0; }
  td { font-size: 13px; border-radius: 8px 0 0 8px; }
  td.fa { font-size: 12px; }
  tr:nth-child(odd) > * { background: #f3f6f9; }
</style><table><tbody></tbody></table>`, function (root) {
  const rows = [['NAV ابطال', '136,704'], ['زمان اعلام', '1403/9/21 14:18'], ['قیمت دیروز', '136,129'], ['حجم معاملات', '61.08 M'], ['ارزش معاملات', '8,550.403 B'],
    ['تعداد معاملات', '26,543'], ['بیشترین و کمترین', '138,520 - 140,728'], ['آخرین معامله', '14:27:13'], ['آستانه فردا', '125,979 - 153,973'], ['حجم مبنا', '1'],
    ['وضعیت گروه', 'معامله پیوسته'], ['بازار', 'بورس کالا']];
  root.querySelector('tbody').innerHTML = rows.map(([k, v]) =>
    `<tr><th scope="row">${k}</th><td class="${/[\u0600-\u06ff]/.test(v) ? 'fa' : ''}"><bdi dir="ltr">${v}</bdi></td></tr>`).join('');
});

component('symbol-panel', `<style>
  :host { display: flex; flex-direction: column; background: #fff; border-radius: 18px; overflow: hidden; box-shadow: 0 2px 4px #1d2b4a14; }
  .body { padding: 8px 16px 12px; display: flex; flex-direction: column; flex: 1; }
  order-book { margin-top: 17px; } period-tabs { margin-top: 9px; } day-chart { margin-top: 8px; } holder-split { margin-top: 5px; } fact-table { margin-top: 26px; }
</style><symbol-head></symbol-head>
<div class="body"><trade-buttons></trade-buttons><info-tabs></info-tabs><price-range></price-range><order-book></order-book>
<period-tabs></period-tabs><day-chart></day-chart><holder-split></holder-split><fact-table></fact-table></div>`);

component('trading-app', `<style>
  :host { display: grid; grid-template-columns: minmax(0, 1fr) 382px; gap: 8px; min-height: 100vh; padding: 14px 8px 8px;
      background: linear-gradient(#dce1ea, #dce1ea) 0 5px / 100% 1px no-repeat; }
  main { display: flex; flex-direction: column; gap: 8px; min-width: 0; }
  chart-card { flex: 1; }
  aside { display: flex; flex-direction: column; } symbol-panel { flex: 1; }
</style>
<main><top-bar></top-bar><ticker-row></ticker-row><chart-card></chart-card></main>
<aside><user-box></user-box><symbol-panel></symbol-panel></aside>`);
</script>
</body>
</html>
